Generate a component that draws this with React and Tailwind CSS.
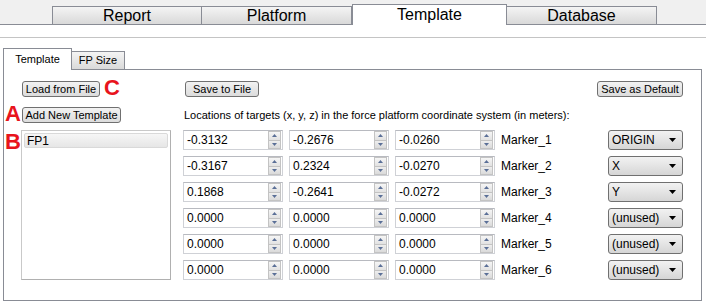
import React from "react";

const font = { fontFamily: '"Liberation Sans", Arial, sans-serif' };

const rows = [
  ["-0.3132", "-0.2676", "-0.0260", "Marker_1", "ORIGIN"],
  ["-0.3167", "0.2324", "-0.0270", "Marker_2", "X"],
  ["0.1868", "-0.2641", "-0.0272", "Marker_3", "Y"],
  ["0.0000", "0.0000", "0.0000", "Marker_4", "(unused)"],
  ["0.0000", "0.0000", "0.0000", "Marker_5", "(unused)"],
  ["0.0000", "0.0000", "0.0000", "Marker_6", "(unused)"],
];

const TopTab = ({ label, active }) => (
  <div
    className={
      active
        ? "w-[155px] h-[21px] -mb-px bg-white border border-b-0 border-[#898c95] flex items-center justify-center text-[16px] text-black leading-none"
        : "w-[150px] h-[18px] border border-b-0 border-l-0 first:border-l border-[#898c95] bg-gradient-to-b from-[#f4f4f4] to-[#d9d9d9] flex items-center justify-center text-[16px] text-black leading-none"
    }
  >
    {label}
  </div>
);

const Button = ({ children, className }) => (
  <div
    className={
      "h-[16px] border border-[#707070] rounded-[3px] bg-gradient-to-b from-[#f2f2f2] to-[#dcdcdc] flex items-center justify-center text-[11px] text-black leading-none " +
      className
    }
  >
    {children}
  </div>
);

const Spin = ({ value }) => (
  <div className="w-[100px] h-[20px] border border-[#cfd1d6] border-t-[#b8bac0] bg-white flex items-center">
    <span className="flex-1 pl-[3px] text-[12px] text-black leading-none">{value}</span>
    <div className="w-[13px] h-[18px] mr-[1px] flex flex-col border border-[#c3c3c3]">
      <div className="flex-1 bg-gradient-to-b from-[#f6f6f6] to-[#e2e2e2] border-b border-[#c3c3c3] flex items-center justify-center">
        <svg width="5" height="3" viewBox="0 0 5 3"><path d="M0 3 L2.5 0 L5 3 Z" fill="#5a6f97" /></svg>
      </div>
      <div className="flex-1 bg-gradient-to-b from-[#eeeeee] to-[#dadada] flex items-center justify-center">
        <svg width="5" height="3" viewBox="0 0 5 3"><path d="M0 0 L2.5 3 L5 0 Z" fill="#5a6f97" /></svg>
      </div>
    </div>
  </div>
);

const Combo = ({ value }) => (
  <div className="w-[75px] h-[20px] border border-[#707070] rounded-[3px] bg-gradient-to-b from-[#f2f2f2] to-[#d6d6d6] flex items-center pl-[3px] pr-[6px]">
    <span className="flex-1 text-[12px] text-black leading-none">{value}</span>
    <svg width="7" height="4" viewBox="0 0 7 4"><path d="M0 0 L7 0 L3.5 4 Z" fill="#000" /></svg>
  </div>
);

const Letter = ({ children }) => (
  <span className="text-[22px] font-bold text-[#e8141c] leading-none">{children}</span>
);

export default function App() {
  return (
    <div className="w-[706px] h-[306px] bg-white overflow-hidden" style={font}>
      <div className="h-[25px] bg-[#f0f0f0] border-b border-[#898c95] flex items-end pl-[52px]">
        <TopTab label="Report" />
        <TopTab label="Platform" />
        <TopTab label="Template" active />
        <TopTab label="Database" />
      </div>
      <div className="mt-[12px] border-t border-[#c4c4c4]" />
      <div className="mt-[9px] flex items-end pl-[3px] h-[22px]">
        <div className="w-[69px] h-[22px] -mb-px bg-white border border-b-0 border-[#898c95] flex items-center justify-center text-[11px] leading-none text-black relative z-10">
          Template
        </div>
        <div className="w-[53px] h-[18px] border border-b-0 border-l-0 border-[#898c95] bg-gradient-to-b from-[#f4f4f4] to-[#dadada] flex items-center justify-center text-[11px] leading-none text-black">
          FP Size
        </div>
      </div>
      <div className="ml-[3px] w-[699px] h-[232px] border border-[#898c95] pt-[11px]">
        <div className="flex h-[16px]">
          <div className="w-[179px] pl-[18px] flex items-center">
            <Button className="w-[78px]">Load from File</Button>
            <span className="ml-[4px]"><Letter>C</Letter></span>
          </div>
          <div className="flex-1 pl-[2px] pr-[18px] flex items-center">
            <Button className="w-[74px]">Save to File</Button>
            <Button className="w-[86px] ml-auto">Save as Default</Button>
          </div>
        </div>
        <div className="flex h-[16px] mt-[10px]">
          <div className="w-[179px] flex items-center">
            <span className="w-[18px] pl-[1px]"><Letter>A</Letter></span>
            <Button className="w-[99px]">Add New Template</Button>
          </div>
          <div className="flex-1 pl-[1px] flex items-center text-[11px] text-black leading-none">
            Locations of targets (x, y, z) in the force platform coordinate system (in meters):
          </div>
        </div>
        <div className="flex mt-[7px]">
          <div className="w-[179px] flex items-start">
            <span className="w-[17px] pl-[1px] pt-[1px]"><Letter>B</Letter></span>
            <div className="w-[150px] h-[150px] border border-[#c9c9c9] border-r-[#b0b0b0] border-b-[#b0b0b0] p-[2px]">
              <div className="h-[15px] bg-gradient-to-b from-[#f6f6f6] to-[#e6e6e6] border border-[#d9d9d9] rounded-[2px] flex items-center pl-[2px] text-[12px] leading-none text-black">
                FP1
              </div>
            </div>
          </div>
          <div className="flex flex-col gap-[6px]">
            {rows.map((r) => (
              <div key={r[3]} className="flex items-center h-[20px]">
                <Spin value={r[0]} />
                <div className="w-[6px]" />
                <Spin value={r[1]} />
                <div className="w-[6px]" />
                <Spin value={r[2]} />
                <span className="w-[113px] pl-[6px] pb-[1px] text-[12px] leading-none text-black">{r[3]}</span>
                <Combo value={r[4]} />
              </div>
            ))}
          </div>
        </div>
      </div>
    </div>
  );
}
